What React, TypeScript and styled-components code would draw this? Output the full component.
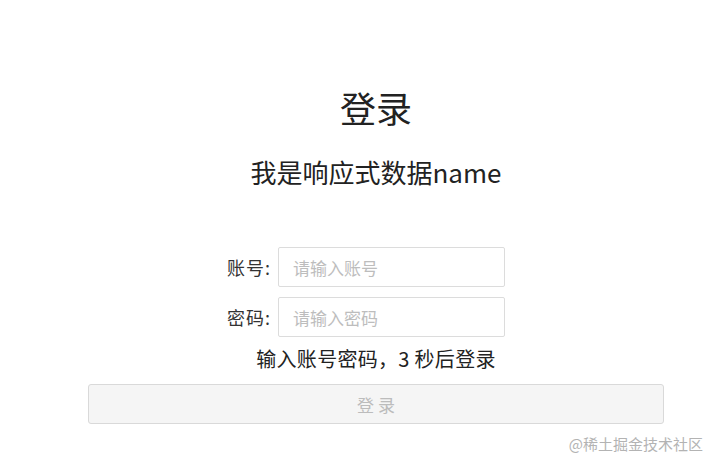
import React from "react";
import styled, { createGlobalStyle } from "styled-components";

const GlobalStyle = createGlobalStyle`
  html, body {
    margin: 0;
    padding: 0;
    background: #ffffff;
  }
  body {
    font-family: "Noto Sans CJK SC", "Noto Sans", sans-serif;
    color: #333333;
  }
`;

const Page = styled.div`
  position: relative;
  width: 717px;
  height: 468px;
  overflow: hidden;
  box-sizing: border-box;
  padding-top: 87px;
`;

const Container = styled.div`
  width: 576px;
  margin-left: 88px;
  display: flex;
  flex-direction: column;
  align-items: center;
`;

const Title = styled.h1`
  margin: 0;
  font-size: 36px;
  line-height: 40px;
  font-weight: 400;
  color: #222222;
`;

const Subtitle = styled.h2`
  margin: 30px 0 0;
  font-size: 26px;
  line-height: 30px;
  font-weight: 400;
  color: #222222;
`;

const Form = styled.div`
  margin-top: 60px;
  display: flex;
  flex-direction: column;
  align-items: center;
  gap: 10px;
`;

const Row = styled.label`
  display: flex;
  align-items: center;
  gap: 7px;
  padding-right: 20px;
`;

const Label = styled.span`
  font-size: 18px;
  letter-spacing: 1px;
  color: #333333;
  width: 44px;
  text-align: right;
  white-space: nowrap;
`;

const Input = styled.input`
  box-sizing: border-box;
  width: 227px;
  height: 40px;
  border: 1px solid #dcdcdc;
  border-radius: 2px;
  padding: 0 14px;
  font-family: "Noto Sans CJK SC", "Noto Sans", sans-serif;
  font-size: 17px;
  color: #333333;
  outline: none;
  &::placeholder {
    color: #bdbdbd;
  }
`;

const Hint = styled.p`
  margin: 8px 0 0;
  font-size: 20px;
  letter-spacing: 0.3px;
  line-height: 28px;
  color: #222222;
`;

const Button = styled.button`
  box-sizing: border-box;
  width: 576px;
  height: 40px;
  margin-top: 11px;
  background: #f5f5f5;
  border: 1px solid #d9d9d9;
  border-radius: 3px;
  font-family: "Noto Sans CJK SC", "Noto Sans", sans-serif;
  font-size: 17px;
  letter-spacing: 4px;
  text-indent: 4px;
  color: #bcbcbc;
  cursor: not-allowed;
`;

const Watermark = styled.div`
  position: absolute;
  right: 14px;
  bottom: 14px;
  font-size: 15px;
  line-height: 20px;
  color: #b3b3b3;
`;

export default function App() {
  return (
    <>
      <GlobalStyle />
      <Page>
        <Container>
          <Title>登录</Title>
          <Subtitle>我是响应式数据name</Subtitle>
          <Form>
            <Row>
              <Label>账号:</Label>
              <Input placeholder="请输入账号" />
            </Row>
            <Row>
              <Label>密码:</Label>
              <Input type="password" placeholder="请输入密码" />
            </Row>
          </Form>
          <Hint>输入账号密码，3 秒后登录</Hint>
          <Button disabled>登录</Button>
        </Container>
        <Watermark>@稀土掘金技术社区</Watermark>
      </Page>
    </>
  );
}
